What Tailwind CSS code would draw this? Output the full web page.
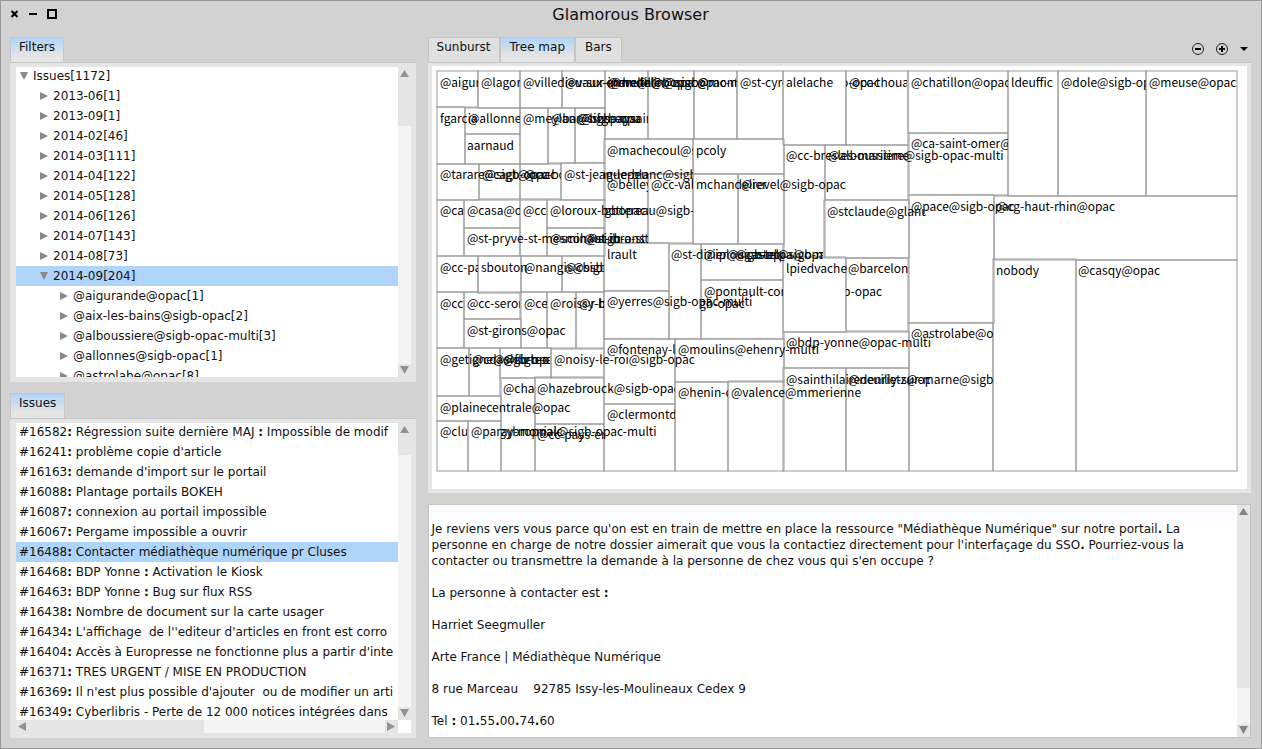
<!DOCTYPE html>
<html lang="fr">
<head>
<meta charset="utf-8">
<title>Glamorous Browser</title>
<script src="https://cdn.jsdelivr.net/npm/@tailwindcss/browser@4"></script>
</head>
<body class="h-screen overflow-hidden bg-[#d2d2d2] font-['DejaVu_Sans',sans-serif] text-xs text-[#111]">
<div class="flex h-full flex-col border border-[#999] pr-2.5 pb-2.5 pl-[9px]">
  <header class="grid h-9 shrink-0 grid-cols-[1fr_auto_1fr] items-start">
    <div class="flex gap-1.5 pt-[7px]">
      <button aria-label="Fermer" class="h-3 w-3"><svg class="h-3 w-3" viewBox="0 0 12 12"><path d="M1.5 3 7.5 9M7.5 3l-6 6" stroke="#000" stroke-width="2"/></svg></button>
      <button aria-label="Réduire" class="h-3 w-3"><svg class="h-3 w-3" viewBox="0 0 12 12"><path d="M1 6h8" stroke="#000" stroke-width="2"/></svg></button>
      <button aria-label="Agrandir" class="h-3 w-3"><svg class="h-3 w-3" viewBox="0 0 12 12"><path d="M2 2h8v8H2z" fill="none" stroke="#000" stroke-width="2"/></svg></button>
    </div>
    <h1 class="pt-0.5 text-base leading-6">Glamorous Browser</h1>
  </header>

  <main class="grid min-h-0 flex-1 grid-cols-[33fr_67fr] gap-3">
    <div class="flex min-h-0 min-w-0 flex-col gap-[11px]">
      <section class="flex min-h-0 flex-1 basis-0 flex-col">
        <div class="flex"><button class="h-[25px] border border-b-0 border-[#c5c5c5] bg-linear-to-b from-[#afd4fa] to-[#e5e5e5] to-75% px-2 pb-1.5 text-xs">Filters</button></div>
        <div class="flex min-h-0 flex-1 border-t border-[#c5c5c5] bg-[#e5e5e5] pt-1 pr-[5px] pb-[5px] pl-1.5">
          <div class="min-w-0 flex-1 overflow-hidden bg-white"><ul id="tree" class="-mt-px"></ul></div>
          <div class="flex w-[13px] flex-col bg-[#e5e5e5]">
            <svg class="h-[59px] w-[13px]" viewBox="0 0 13 59"><path d="M2 10h9L6.500 3z" fill="#929292"/></svg>
            <div class="flex-1 bg-[#f4f4f4]"></div>
            <svg class="h-[13px] w-[13px]" viewBox="0 0 13 13"><path d="M2 2h9L6.500 10z" fill="#929292"/></svg>
          </div>
        </div>
      </section>

      <section class="flex min-h-0 flex-1 basis-0 flex-col">
        <div class="flex"><button class="h-[25px] border border-b-0 border-[#c5c5c5] bg-linear-to-b from-[#afd4fa] to-[#e5e5e5] to-75% px-2 pb-1.5 text-xs">Issues</button></div>
        <div class="flex min-h-0 flex-1 flex-col border-t border-[#c5c5c5] bg-[#e5e5e5] pt-1 pr-[5px] pb-[5px] pl-1.5">
          <div class="flex min-h-0 flex-1">
            <div class="min-w-0 flex-1 overflow-hidden bg-white"><ul id="issues" class="-mt-px"></ul></div>
            <div class="flex w-[13px] flex-col bg-[#e5e5e5]">
              <svg class="h-8 w-[13px]" viewBox="0 0 13 32"><path d="M2 10h9L6.500 3z" fill="#929292"/></svg>
              <div class="flex-1 bg-[#f4f4f4]"></div>
              <svg class="h-[13px] w-[13px]" viewBox="0 0 13 13"><path d="M2 2h9L6.500 10z" fill="#929292"/></svg>
            </div>
          </div>
          <div class="flex h-[13px]">
            <svg class="h-[13px] w-[188px]" viewBox="0 0 188 13"><path d="M10 2v9L2 6.500z" fill="#929292"/></svg>
            <div class="flex-1 bg-[#f4f4f4]"></div>
            <svg class="h-[13px] w-[13px]" viewBox="0 0 13 13"><path d="M2 2v9l8-4.500z" fill="#929292"/></svg>
            <div class="w-[13px] bg-white"></div>
          </div>
        </div>
      </section>
    </div>

    <div class="flex min-h-0 min-w-0 flex-col gap-[11px]">
      <section class="flex min-h-0 flex-[457] basis-0 flex-col">
        <div class="flex">
          <button class="h-[25px] border border-b-0 border-[#c5c5c5] bg-[#e0e0e0] px-2 pb-1.5 text-xs">Sunburst</button>
          <button class="h-[25px] border border-b-0 border-[#c5c5c5] bg-linear-to-b from-[#afd4fa] to-[#e5e5e5] to-75% px-[9px] pb-1.5 text-xs">Tree map</button>
          <button class="h-[25px] border border-b-0 border-[#c5c5c5] bg-[#e0e0e0] px-[9px] pb-1.5 text-xs">Bars</button>
          <div class="ml-auto flex items-center gap-2.5 pb-0.5">
            <button aria-label="Zoom arrière"><svg class="h-3.5 w-3.5" viewBox="0 0 14 14"><circle cx="7" cy="7" r="5.500" fill="none" stroke="#222"/><path d="M4 7h6" stroke="#000" stroke-width="2"/></svg></button>
            <button aria-label="Zoom avant"><svg class="h-3.5 w-3.5" viewBox="0 0 14 14"><circle cx="7" cy="7" r="5.500" fill="none" stroke="#222"/><path d="M4 7h6M7 4v6" stroke="#000" stroke-width="2"/></svg></button>
            <button aria-label="Menu"><svg class="h-3.5 w-3" viewBox="0 0 12 14"><path d="M1 5h8L5 9z"/></svg></button>
          </div>
        </div>
        <div class="min-h-0 flex-1 border-t border-[#c5c5c5] bg-[#e5e5e5] px-1 pt-[3px] pb-1">
          <div class="h-full overflow-hidden bg-white">
            <svg id="map" class="h-[423px] w-[815px] font-['Noto_Sans_CJK_SC',sans-serif] text-xs" viewBox="432 66 815 423"></svg>
          </div>
        </div>
      </section>

      <section class="flex min-h-0 flex-[233] basis-0 border border-[#c5c5c5] bg-white">
        <div class="min-w-0 flex-1 overflow-hidden leading-4">
          <div class="h-4 bg-[#fbfcff]"></div>
          <div class="space-y-4 px-[3px]">
            <p>Je reviens vers vous parce qu'on est en train de mettre en place la ressource "Médiathèque Numérique" sur notre portail<b>.</b> La personne en charge de notre dossier aimerait que vous la contactiez directement pour l'interfaçage du SSO<b>.</b> Pourriez-vous la contacter ou transmettre la demande à la personne de chez vous qui s'en occupe ?</p>
            <p>La personne à contacter est <b>:</b></p>
            <p>Harriet Seegmuller</p>
            <p>Arte France | Médiathèque Numérique</p>
            <p>8 rue Marceau&nbsp;&nbsp;&nbsp; 92785 Issy-les-Moulineaux Cedex 9</p>
            <p>Tel <b>:</b> 01<b>.</b>55<b>.</b>00<b>.</b>74<b>.</b>60</p>
          </div>
        </div>
        <div class="flex w-[13px] flex-col bg-[#e5e5e5]">
          <svg class="h-[13px] w-[13px]" viewBox="0 0 13 13"><path d="M2 10h9L6.500 3z" fill="#858585"/></svg>
          <div class="flex-[171] bg-[#e5e5e5]"></div>
          <div class="flex-[36] bg-[#f4f4f4]"></div>
          <svg class="h-[13px] w-[13px]" viewBox="0 0 13 13"><path d="M2 2h9L6.500 10z" fill="#858585"/></svg>
        </div>
      </section>
    </div>
  </main>
</div>

<script>
const closed = '<svg class="h-3 w-3 shrink-0" viewBox="0 0 12 12"><path d="M2 2v8l8-4z" fill="#888"/></svg>';
const open = '<svg class="h-3 w-3 shrink-0" viewBox="0 0 12 12"><path d="M2 2h8L6 10z" fill="#888"/></svg>';
const pads = ['pl-0.5', 'pl-[22px]', 'pl-[42px]'];
const tree = [
  [0, 'Issues[1172]', 1], [1, '2013-06[1]'], [1, '2013-09[1]'], [1, '2014-02[46]'], [1, '2014-03[111]'],
  [1, '2014-04[122]'], [1, '2014-05[128]'], [1, '2014-06[126]'], [1, '2014-07[143]'], [1, '2014-08[73]'],
  [1, '2014-09[204]', 1, 1], [2, '@aigurande@opac[1]'], [2, '@aix-les-bains@sigb-opac[2]'],
  [2, '@alboussiere@sigb-opac-multi[3]'], [2, '@allonnes@sigb-opac[1]'], [2, '@astrolabe@opac[8]'],
];
document.getElementById('tree').innerHTML = tree.map(([d, t, o, s]) =>
  `<li><button class="flex h-5 w-full items-center gap-[3px] whitespace-pre ${pads[d]} ${s ? 'bg-[#afd4fa]' : ''}">${o ? open : closed}${t}</button></li>`).join('');

const issues = [
  ['16582', 'Régression suite dernière MAJ <b>:</b> Impossible de modif'], ['16241', "problème copie d'article"],
  ['16163', "demande d'import sur le portail"], ['16088', 'Plantage portails BOKEH'],
  ['16087', 'connexion au portail impossible'], ['16067', 'Pergame impossible a ouvrir'],
  ['16488', 'Contacter médiathèque numérique pr Cluses'], ['16468', 'BDP Yonne <b>:</b> Activation le Kiosk'],
  ['16463', 'BDP Yonne <b>:</b> Bug sur flux RSS'], ['16438', 'Nombre de document sur la carte usager'],
  ['16434', "L'affichage  de l''editeur d'articles en front est corro"],
  ['16404', "Accès à Europresse ne fonctionne plus a partir d'inte"], ['16371', 'TRES URGENT / MISE EN PRODUCTION'],
  ['16369', "Il n'est plus possible d'ajouter  ou de modifier un arti"],
  ['16349', 'Cyberlibris - Perte de 12 000 notices intégrées dans'],
];
document.getElementById('issues').innerHTML = issues.map(([n, t]) =>
  `<li><button class="block h-5 w-full overflow-hidden px-[3px] text-left leading-5 whitespace-pre ${n === '16488' ? 'bg-[#afd4fa]' : ''}">#${n}<b>:</b> ${t}</button></li>`).join('');

// Cells: left, top, right, bottom
const cells = [
  [437,71,478,107],[478,71,520,108],[520,71,562,108],[562,71,605,108],
  [437,107,465,164],[465,108,520,134],[465,134,520,164],[520,108,548,164],[548,108,575,163],[575,108,605,163],
  [437,164,479,200],[479,164,520,199],[520,164,561,199],[561,163,605,200],
  [437,200,464,256],[464,200,520,228],[520,200,547,256],[547,200,605,228],[464,228,520,256],[547,228,605,256],
  [437,256,478,292],[478,256,521,293],[521,256,562,292],[562,256,604,292],
  [437,292,464,348],[464,292,520,319],[464,319,521,348],[521,292,547,348],[547,292,576,348],[576,292,604,348],
  [437,348,469,396],[469,348,500,396],[500,348,551,378],[551,349,604,378],[437,396,501,421],
  [437,421,468,471],[468,421,501,471],[501,378,535,471],[535,377,604,424],[535,424,604,471],
  [605,71,648,139],[648,71,694,139],[694,71,737,139],[737,71,783,139],[604,139,693,174],[693,139,784,174],
  [604,174,648,243],[648,174,693,243],[693,174,738,244],[738,174,784,244],
  [604,243,669,291],[604,291,669,339],[669,244,701,339],[701,244,783,280],[701,280,783,339],
  [604,339,675,404],[604,404,675,471],[675,339,784,382],[675,382,728,471],[728,381,784,471],
  [783,71,846,145],[846,71,908,145],[784,145,825,257],[825,145,908,200],[824,200,909,258],
  [783,257,846,332],[846,258,908,331],[784,332,909,368],[783,368,846,471],[846,368,909,471],
  [908,71,1008,133],[909,133,1008,195],[1008,71,1058,196],[1058,71,1146,196],[1146,71,1237,196],
  [909,195,994,323],[994,196,1237,260],[909,323,993,471],[993,259,1076,471],[1076,260,1237,471],
];
// Labels: left, cell top, text, right clip, left clip
const labels = [
  [440,71,'@aigurande',478],[481,71,'@lagorce',520],[523,71,'@villedieu-sur-indre@',648],[565,71,'@vaux-en-velin@sigb',660],
  [607,71,'@medelin@sigbopac-multi',737],[610,71,'@mutille@opac',694],[651,71,'@bopac@multi',710],[697,71,'@montrit',736],
  [740,71,'@st-cyr-sur',783],[786,71,'alelache'],[849,71,'@cc-thouars',907],[841,71,'o-opac',900,846],
  [911,71,'@chatillon@opac',1008],[1011,71,'ldeuffic'],[1061,71,'@dole@sigb-opac',1146],[1149,71,'@meuse@opac',1237],
  [440,107,'fgarcia'],[468,107,'@allonnes',520],[523,107,'@meylan@sigb-opac',640],[551,107,'@bar@sigb-opac',640],[578,107,'@bbspaysain',648],
  [467,134,'aarnaud'],[607,139,'@machecoul@sigb',693],[696,139,'pcoly'],
  [911,132,'@ca-saint-omer@sigb',1008],[786,144,'@cc-bresles-maritime@',908],[828,144,'@alboussiere@sigb-opac-multi'],
  [440,163,'@tarare@sigb-opac'],[482,163,'@cagt@opac'],[524,163,'@cc-bourg',561],[564,163,'@st-jean-le-blanc@sigb-opac',693],[599,163,'nguepeupa',648,604],
  [607,173,'@belley@',648],[651,173,'@cc-vallee',693],[696,173,'mchandelier'],[741,173,'@revel@sigb-opac'],
  [440,199,'@cabries',463],[467,199,'@casa@opac',520],[523,199,'@cc-pays',547],[550,199,'@loroux-bottereau@sigb-opac',693],[601,199,'igbopaca',648,604],
  [827,200,'@stclaude@glanum',926],[911,195,'@pace@sigb-opac'],[996,195,'@cg-haut-rhin@opac'],
  [467,227,'@st-pryve-st-mesmin@sigb-opac',620],[550,227,'@scohaut-in-a-st',648],[584,227,'@st-ibronsto',648],
  [607,243,'lrault'],[671,243,'@st-dizier@sigb-opac',783],[704,243,'@iplougastel@sigb-multi',823],[735,243,'@castelpa@opac',823],
  [440,256,'@cc-pays',478],[481,256,'sbouton'],[524,256,'@nangis@sigb',604],[565,256,'@cbsb@sigb',604],
  [786,257,'lpiedvache'],[848,257,'@barcelonne',908],[996,259,'nobody'],[1078,259,'@casqy@opac'],
  [704,280,'@pontault-combault',783],[843,280,'b-opac',900,846],[699,292,'gb-opac',750,701],
  [440,292,'@cc-pays',463],[467,292,'@cc-seronais',520],[524,292,'@cergy',547],[550,292,'@roissy-brie',604],[579,292,'@r-bois',604],
  [607,290,'@yerres@sigb-opac-multi'],[467,319,'@st-girons@opac'],[911,322,'@astrolabe@opac',993],
  [786,331,'@bdp-yonne@opac-multi'],[607,338,'@fontenay-le',675],[678,338,'@moulins@ehenry-multi'],
  [440,348,'@getigne@sigb-opac',550],[472,348,'@cda@sigb-opac',550],[503,348,'@fbrte-opac',550],[554,348,'@noisy-le-roi@sigb-opac'],
  [786,368,'@sainthilairedenrietz@opac',930],[848,368,'@neuilly-sur-marne@sigb-opac',993],
  [503,377,'@chambly',535],[537,377,'@hazebrouck@sigb-opac-multi',675],[678,381,'@henin-carvin',728],[731,381,'@valence@mmerienne'],
  [440,396,'@plainecentrale@opac'],[607,403,'@clermontdefer',675],
  [440,420,'@cluses',467],[471,420,'@paray-monial@sigb-opac-multi'],[499,420,'gybropnaic',604,501],[537,423,'@cc-pays-en',604],
];
document.getElementById('map').innerHTML =
  cells.map(([l, t, r, b]) => `<rect x="${l}" y="${t}" width="${r - l}" height="${b - t}" fill="none" stroke="#999"/>`).join('') +
  labels.map(([x, t, s, r = 1240, l = x]) =>
    `<svg x="${l}" y="${t}" width="${r - l}" height="22" overflow="hidden"><text x="${x - l}" y="16" fill="#000">${s}</text></svg>`).join('');
</script>
</body>
</html>
